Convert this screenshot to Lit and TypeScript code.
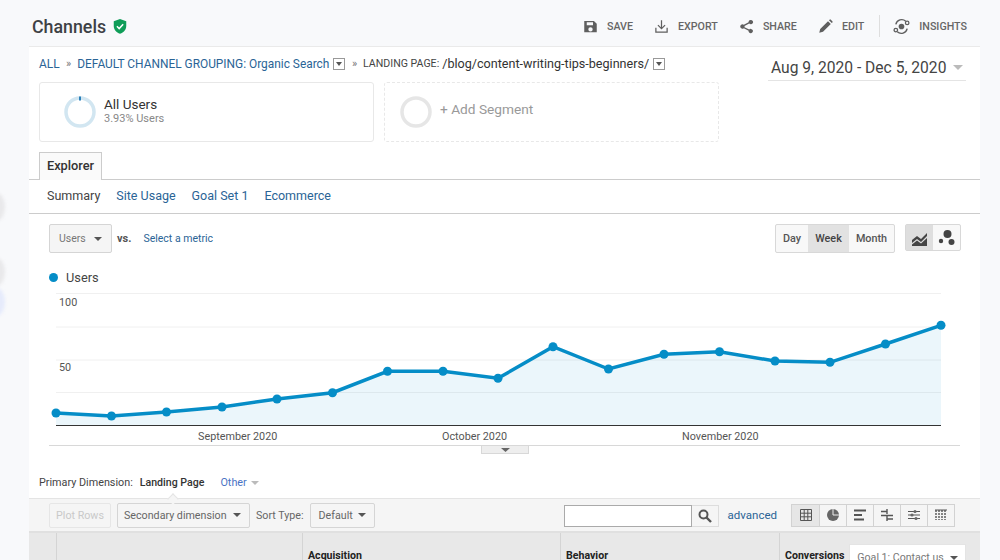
import { LitElement, html, css, svg } from "lit";
import { customElement } from "lit/decorators.js";

const POINTS: [number, number][] = [
  [56, 413], [111.5, 416], [166.5, 412], [222, 407], [277, 399], [332.5, 392.7],
  [387.5, 371.3], [443, 371.3], [498, 378.3], [553, 346.7], [608.5, 369], [664, 354.3],
  [719.5, 351.7], [775, 361], [830, 362.3], [885.5, 344], [941, 325.3],
];
const line = POINTS.map((p) => p.join(",")).join(" ");
const area = `56,425 ${line} 941,425`;

const caret = html`<span class="caret"></span>`;

@customElement("app-root")
export class AppRoot extends LitElement {
  static styles = css`
    :host { display: block; position: relative; width: 1000px; height: 560px; overflow: hidden;
      background: #f8f9fb; font-family: Roboto, "Liberation Sans", sans-serif; color: #444; }
    .smudge { position: absolute; left: -12px; width: 17px; height: 28px; border-radius: 50%; background: #e9e9eb; filter: blur(1.5px); }
    .s1 { top: 193px; } .s2 { top: 258px; } .s3 { top: 288px; background: #e6ebfb; }
    .head { height: 46px; box-sizing: border-box; display: flex; align-items: center; padding: 6px 33px 0 32px; }
    h1 { margin: 0 7px 0 0; font-size: 17.8px; font-weight: 500; color: #3e4145; }
    .shield { width: 14px; height: 15px; }
    .actions { margin-left: auto; display: flex; align-items: center; font-size: 10.7px; font-weight: 500; color: #666; }
    .act { display: flex; align-items: center; gap: 9px; margin-left: 21px; }
    .act svg { width: 15px; height: 15px; fill: #5f5f5f; display: block; }
    .sep { width: 1px; height: 22px; background: #dedede; margin: 0 13px 0 15px; }
    .sep + .act { margin-left: 0; }
    .sep + .act svg { width: 17px; height: 17px; }
    .panel { margin-left: 29px; width: 951px; height: 514px; background: #fff; border-top: 1px solid #eaeaea; box-sizing: border-box; display: flex; flex-direction: column; }
    .top { height: 35px; display: flex; padding-left: 10px; }
    .crumbs { display: flex; align-items: center; height: 33px; font-size: 11.9px; color: #2a6496; white-space: nowrap; }
    .crumbs .gt { color: #777; margin: 0 6px 0 6.5px; font-size: 11px; }
    .crumbs .lp { font-size: 10.6px; color: #444; margin-right: 3px; }
    .crumbs .val { font-size: 12.6px; color: #333; }
    .mini { width: 12px; height: 12px; border: 1px solid #999; box-sizing: border-box; margin-left: 4px; display: inline-flex; align-items: center; justify-content: center; }
    .mini::after { content: ""; border: 3px solid transparent; border-top: 4px solid #555; border-bottom: 0; }
    .date { margin-left: auto; margin-right: 14px; width: 198px; height: 34px; box-sizing: border-box; border-bottom: 1px solid #e4e4e4; font-size: 15.6px; color: #444; display: flex; align-items: center; padding: 8px 0 0 3px; white-space: nowrap; }
    .date::after { content: ""; margin-left: 7px; border: 5.5px solid transparent; border-top: 5px solid #bbb; border-bottom: 0; }
    .segs { display: flex; gap: 10px; padding-left: 10px; height: 69px; }
    .seg { width: 335px; height: 60px; box-sizing: border-box; border: 1px solid #e8e8e8; border-radius: 3px; display: flex; align-items: center; }
    .seg.add { border-style: dashed; }
    .seg svg { width: 34px; height: 34px; margin-left: 23px; flex: none; }
    .seg.add svg { margin-left: 14px; }
    .seg .txt { padding-bottom: 2px; }
    .seg .n { margin-left: 7px; font-size: 13.5px; color: #333; line-height: 15px; }
    .seg .p { margin-left: 7px; font-size: 11px; color: #888; line-height: 13px; }
    .seg.add .n { font-size: 13.7px; color: #999; margin-left: 7px; line-height: 17px; padding-bottom: 5px; }
    .tabs { height: 28px; border-bottom: 1px solid #ccc; padding-left: 10px; box-sizing: content-box; }
    .tab { width: 63px; height: 28px; box-sizing: border-box; border: 1px solid #ccc; border-bottom: 0; position: relative; top: 1px; font-size: 12.8px; font-weight: 500; color: #333; display: flex; align-items: center; justify-content: center; background: #fafafa; padding-bottom: 2px; }
    .subs { border-bottom: 1px solid #ccc; display: flex; align-items: center; padding: 0 0 2px 18px; box-sizing: border-box; height: 34px; gap: 16px; font-size: 12.5px; color: #2a6496; }
    .subs .on { color: #444; }
    .ctrl { height: 29px; margin-top: 10px; display: flex; align-items: center; padding-left: 20px; }
    .btn { box-sizing: border-box; border: 1px solid #d5d5d5; border-radius: 2px; background: #f5f5f5; display: flex; align-items: center; white-space: nowrap; }
    .caret { display: inline-block; border: 4px solid transparent; border-top: 4px solid #555; border-bottom: 0; margin-left: auto; }
    .users { width: 63px; height: 29px; font-size: 10.5px; color: #777; padding: 0 9px; }
    .vs { font-size: 11px; font-weight: 700; color: #555; margin: 0 12px 0 5px; }
    .metric { font-size: 10.5px; color: #2a6496; }
    .group { display: flex; border: 1px solid #d8d8d8; border-radius: 2px; background: #f8f8f8; }
    .group > div { display: flex; align-items: center; justify-content: center; }
    .time { margin-left: auto; height: 29px; box-sizing: border-box; font-size: 10.8px; font-weight: 500; color: #555; }
    .time div { width: 32px; } .time .wk { width: 41px; background: #e2e2e2; color: #444; } .time .mo { width: 45px; }
    .kind { margin: 0 19px 2px 10px; height: 27px; box-sizing: border-box; }
    .kind div { width: 27px; } .kind .on { background: #dedede; }
    .kind svg { width: 18px; height: 18px; fill: #444; }
    .legend { height: 32px; margin-top: 8px; display: flex; align-items: center; padding-left: 20px; font-size: 12.8px; color: #444; gap: 8px; }
    .dot { width: 9px; height: 9px; border-radius: 50%; background: #058dc7; }
    .chart { display: block; width: 951px; height: 172px; flex: none; }
    .chart text { font: 10.8px Roboto, sans-serif; fill: #555; }
    .dim { height: 33px; box-sizing: border-box; display: flex; align-items: center; padding: 2px 0 0 10px; font-size: 10.8px; color: #444; white-space: nowrap; }
    .dim b { font-weight: 500; font-size: 10.6px; margin: 0 16px 0 7px; color: #333; }
    .dim i { font-style: normal; color: #4a73c4; }
    .dim .c2 { display: inline-block; margin-left: 4px; border: 4px solid transparent; border-top: 4px solid #bbb; border-bottom: 0; }
    .bar { height: 35px; box-sizing: border-box; background: #f5f5f5; border-top: 1px solid #e4e4e4; border-bottom: 2px solid #e0e0e0; display: flex; align-items: center; padding-left: 20px; position: relative; font-size: 10.7px; color: #666; }
    .notch { position: absolute; left: 140px; top: -4px; width: 7px; height: 7px; background: #f5f5f5; border-left: 1px solid #e4e4e4; border-top: 1px solid #e4e4e4; transform: rotate(45deg); }
    .bar .btn { height: 25px; padding: 0 8px; color: #666; }
    .bar .sec { padding-left: 6px; }
    .plot { width: 62px; justify-content: center; color: #c9c9c9 !important; border-color: #e6e6e6 !important; margin-right: 6px; }
    .sec { width: 133px; }
    .sort { margin: 0 6px; }
    .def { width: 65px; }
    .search { margin-left: 189px; margin-top: 1px; display: flex; height: 22px; }
    .search .inp { width: 128px; box-sizing: border-box; background: #fff; border: 1px solid #aaa; }
    .search .go { width: 27px; display: flex; align-items: center; justify-content: center; background: #f5f5f5; border: 1px solid #ddd; border-left: 0; box-sizing: border-box; }
    .search svg { width: 14px; height: 14px; }
    .adv { font-size: 11.5px; color: #2a6496; margin: 0 14px 0 9px; }
    .views { display: flex; height: 23px; border: 1px solid #d2d2d2; box-sizing: border-box; }
    .views div { width: 27px; border-left: 1px solid #d2d2d2; display: flex; align-items: center; justify-content: center; box-sizing: border-box; background: #f5f5f5; }
    .views div:first-child { border-left: 0; background: #e6e6e6; }
    .views svg { width: 14px; height: 14px; stroke: #555; fill: none; }
    .thead { flex: 1; background: #e8e8e8; display: grid; grid-template-columns: 27px 246px 258px 219px 201px; font-size: 10.6px; font-weight: 700; color: #222; overflow: hidden; }
    .thead > div { border-left: 1px solid #d4d4d4; padding: 16px 0 0 5px; white-space: nowrap; box-sizing: border-box; display: flex; min-width: 0; }
    .thead > div:first-child { border-left: 0; }
    .goal { width: 117px; height: 30px; background: #fff; margin: -5px 0 0 5px; font-weight: 400; color: #777; padding: 6px 7px 0 7px; box-sizing: border-box; display: flex; border: 1px solid #e4e4e4; }
    .goal .caret { margin-top: 5px; }
  `;

  render() {
    return html`
      <div class="smudge s1"></div><div class="smudge s2"></div><div class="smudge s3"></div>
      <div class="head">
        <h1>Channels</h1>
        <svg class="shield" viewBox="0 0 16 18">
          <path d="M8 0 15.5 2.8V8.5c0 4.4-3 7.7-7.5 9.3C3.500 16.200.5 12.900.5 8.500V2.800Z" fill="#0f9d58" />
          <path d="M4.300 8.800 7 11.500 11.800 6.300" fill="none" stroke="#fff" stroke-width="1.800" />
        </svg>
        <div class="actions">
          <div class="act"><svg viewBox="0 0 24 24"><path d="M3 3h14.500L22 7.500V21H2V3Zm3 2v5h10V5Zm6 8a3.500 3.500 0 1 0 0 7 3.500 3.500 0 0 0 0-7Z" fill-rule="evenodd"/></svg>SAVE</div>
          <div class="act"><svg viewBox="0 0 24 24"><path d="M11 2h2v11l4-4 1.400 1.400L12 16.800 5.600 10.400 7 9l4 4ZM2 14h2v6h16v-6h2v8H2Z"/></svg>EXPORT</div>
          <div class="act"><svg viewBox="0 0 24 24"><path d="M19 1.500a3.500 3.500 0 1 1-2.700 5.700L8.800 11a3.500 3.500 0 0 1 0 2l7.500 3.800a3.500 3.500 0 1 1-1 1.900l-7.600-3.900a3.500 3.500 0 1 1 0-5.600l7.600-3.900A3.500 3.500 0 0 1 19 1.500Z"/></svg>SHARE</div>
          <div class="act"><svg viewBox="0 0 24 24"><path d="M2 22l1.500-6L16 3.500l4.500 4.500L8 20.500ZM17.500 2l1-1a1.500 1.500 0 0 1 2 0l2.500 2.500a1.500 1.500 0 0 1 0 2l-1 1Z"/></svg>EDIT</div>
          <div class="sep"></div>
          <div class="act"><svg viewBox="0 0 24 24"><circle cx="12" cy="12" r="4"/><path d="M4 9a8.500 8.500 0 0 1 14-4.500M20 15a8.500 8.500 0 0 1-14 4.500" fill="none" stroke="#5f5f5f" stroke-width="2"/><circle cx="20" cy="7" r="2.500" fill="none" stroke="#5f5f5f" stroke-width="1.800"/><circle cx="4" cy="17" r="2.500" fill="none" stroke="#5f5f5f" stroke-width="1.800"/></svg>INSIGHTS</div>
        </div>
      </div>
      <div class="panel">
        <div class="top">
          <div class="crumbs">
            <span>ALL</span><span class="gt">»</span><span>DEFAULT CHANNEL GROUPING: Organic Search</span><span class="mini"></span>
            <span class="gt">»</span><span class="lp">LANDING PAGE:</span><span class="val">/blog/content-writing-tips-beginners/</span><span class="mini"></span>
          </div>
          <div class="date">Aug 9, 2020 - Dec 5, 2020</div>
        </div>
        <div class="segs">
          <div class="seg">
            <svg viewBox="0 0 34 34"><circle cx="17" cy="17" r="14" fill="none" stroke="#d2e6f1" stroke-width="3.500"/><path d="M17 1.500v4" stroke="#2a7fb8" stroke-width="2"/></svg>
            <div class="txt"><div class="n">All Users</div><div class="p">3.93% Users</div></div>
          </div>
          <div class="seg add">
            <svg viewBox="0 0 34 34"><circle cx="17" cy="17" r="14" fill="none" stroke="#e6e6e6" stroke-width="3.500"/></svg>
            <div class="n">+ Add Segment</div>
          </div>
        </div>
        <div class="tabs"><div class="tab">Explorer</div></div>
        <div class="subs"><span class="on">Summary</span><span>Site Usage</span><span>Goal Set 1</span><span>Ecommerce</span></div>
        <div class="ctrl">
          <div class="btn users">Users${caret}</div>
          <span class="vs">vs.</span><span class="metric">Select a metric</span>
          <div class="group time"><div>Day</div><div class="wk">Week</div><div class="mo">Month</div></div>
          <div class="group kind">
            <div class="on"><svg viewBox="0 0 18 18"><path d="M1 16V11L6 7l4 3 6-6v3l-6 6-4-3-5 4Z"/><path d="M1 17v-1.500l5-4 4 3 6-5.500V17Z"/></svg></div>
            <div><svg viewBox="0 0 18 18"><circle cx="9.500" cy="5" r="4"/><circle cx="3" cy="12" r="2.200"/><circle cx="13.500" cy="13" r="3"/></svg></div>
          </div>
        </div>
        <div class="legend"><span class="dot"></span>Users</div>
        <svg class="chart" viewBox="29 293 951 172">
          ${[293.5, 327, 360, 392.5].map((y) => svg`<line x1="56" x2="941" y1=${y} y2=${y} stroke="#f0f0f0" />`)}
          <polygon points=${area} fill="#058dc7" fill-opacity=".08" />
          <polyline points=${line} fill="none" stroke="#058dc7" stroke-width="3.500" />
          ${POINTS.map((p) => svg`<circle cx=${p[0]} cy=${p[1]} r="4.500" fill="#058dc7" />`)}
          <line x1="56" x2="941" y1="425.500" y2="425.500" stroke="#333" />
          <line x1="49" x2="960" y1="445.500" y2="445.500" stroke="#d8d8d8" />
          <text x="59" y="306">100</text><text x="59" y="371">50</text>
          <text x="198" y="439.500">September 2020</text>
          <text x="442" y="439.500">October 2020</text>
          <text x="682" y="439.500">November 2020</text>
          <rect x="481.500" y="445.500" width="47" height="8" fill="#eee" stroke="#d8d8d8" />
          <path d="M501 448h9l-4.500 4Z" fill="#666" />
        </svg>
        <div class="dim">Primary Dimension:<b>Landing Page</b><i>Other</i><span class="c2"></span></div>
        <div class="bar">
          <span class="notch"></span>
          <div class="btn plot">Plot Rows</div>
          <div class="btn sec">Secondary dimension${caret}</div>
          <span class="sort">Sort Type:</span>
          <div class="btn def">Default${caret}</div>
          <div class="search"><div class="inp"></div><div class="go"><svg viewBox="0 0 14 14"><circle cx="5.500" cy="5.500" r="4" fill="none" stroke="#555" stroke-width="2"/><path d="M8.500 8.500l4.500 4.500" stroke="#555" stroke-width="2.400"/></svg></div></div>
          <span class="adv">advanced</span>
          <div class="views">
            <div><svg viewBox="0 0 14 14"><path d="M1.500 1.500h11v11h-11ZM1.500 5.200h11M1.500 8.800h11M5.200 1.500v11M8.800 1.500v11" stroke-width="1"/></svg></div>
            <div><svg viewBox="0 0 14 14"><circle cx="7" cy="7" r="6" fill="#666" stroke="none"/><path d="M7 1v6h6" stroke="#eee" stroke-width="1"/></svg></div>
            <div><svg viewBox="0 0 14 14"><path d="M1 2.500h12M1 7h8M1 11.500h10" stroke-width="2"/></svg></div>
            <div><svg viewBox="0 0 14 14"><path d="M1 3.500h6M7 1v5M7 7.500h6M1 7.500h6M7 7v6M7 11h6" stroke-width="1.400"/></svg></div>
            <div><svg viewBox="0 0 14 14"><path d="M1 3.500h12M1 7h12M1 10.500h12" stroke-width="1"/><circle cx="8" cy="3.500" r="1.600" fill="#666" stroke="none"/><circle cx="5" cy="7" r="1.600" fill="#666" stroke="none"/><circle cx="9" cy="10.500" r="1.600" fill="#666" stroke="none"/></svg></div>
            <div><svg viewBox="0 0 14 14"><path d="M2 2v10M5 2v10M8 2v10M11 2v10" stroke-width="1.400" stroke-dasharray="2 1"/><path d="M1 2h12" stroke-width="1"/></svg></div>
          </div>
        </div>
        <div class="thead">
          <div></div><div></div><div>Acquisition</div><div>Behavior</div>
          <div>Conversions<span class="goal">Goal 1: Contact us${caret}</span></div>
        </div>
      </div>
    `;
  }
}
